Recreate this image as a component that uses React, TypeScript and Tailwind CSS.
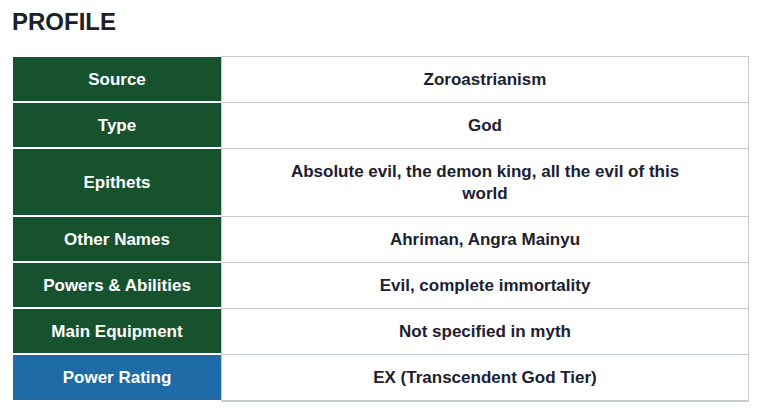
import React from "react";

const rows: { label: string; value: string; blue?: boolean }[] = [
  { label: "Source", value: "Zoroastrianism" },
  { label: "Type", value: "God" },
  { label: "Epithets", value: "Absolute evil, the demon king, all the evil of this world" },
  { label: "Other Names", value: "Ahriman, Angra Mainyu" },
  { label: "Powers & Abilities", value: "Evil, complete immortality" },
  { label: "Main Equipment", value: "Not specified in myth" },
  { label: "Power Rating", value: "EX (Transcendent God Tier)", blue: true },
];

export default function App() {
  return (
    <div
      className="w-[760px] h-[412px] bg-white px-[13px] pt-[6px]"
      style={{ fontFamily: '"Liberation Sans", Arial, sans-serif' }}
    >
      <h1 className="ml-[-1px] text-[24px] leading-[32px] font-bold text-[#1a202c]">PROFILE</h1>
      <div className="mt-[18px] w-[736px] flex flex-col">
        {rows.map((r, i) => (
          <div key={r.label} className="flex">
            <div
              className={
                "w-[208px] shrink-0 flex items-center justify-center text-white font-bold text-[17px] leading-[23px] border-b-2 border-white " +
                (r.blue ? "bg-[#1e6ba8] " : "bg-[#17522f] ") +
                (i === 0 ? "border-t" : "")
              }
            >
              {r.label}
            </div>
            <div
              className={
                "flex-1 flex items-center justify-center border-l border-r border-b border-[#c6cad2] py-[11.5px] text-[#1c2130] font-bold text-[17px] leading-[22px] text-center " +
                (i === 0 ? "border-t" : "") +
                (i === rows.length - 1 ? " border-b-2" : "")
              }
            >
              <span className="max-w-[420px]">{r.value}</span>
            </div>
          </div>
        ))}
      </div>
    </div>
  );
}
